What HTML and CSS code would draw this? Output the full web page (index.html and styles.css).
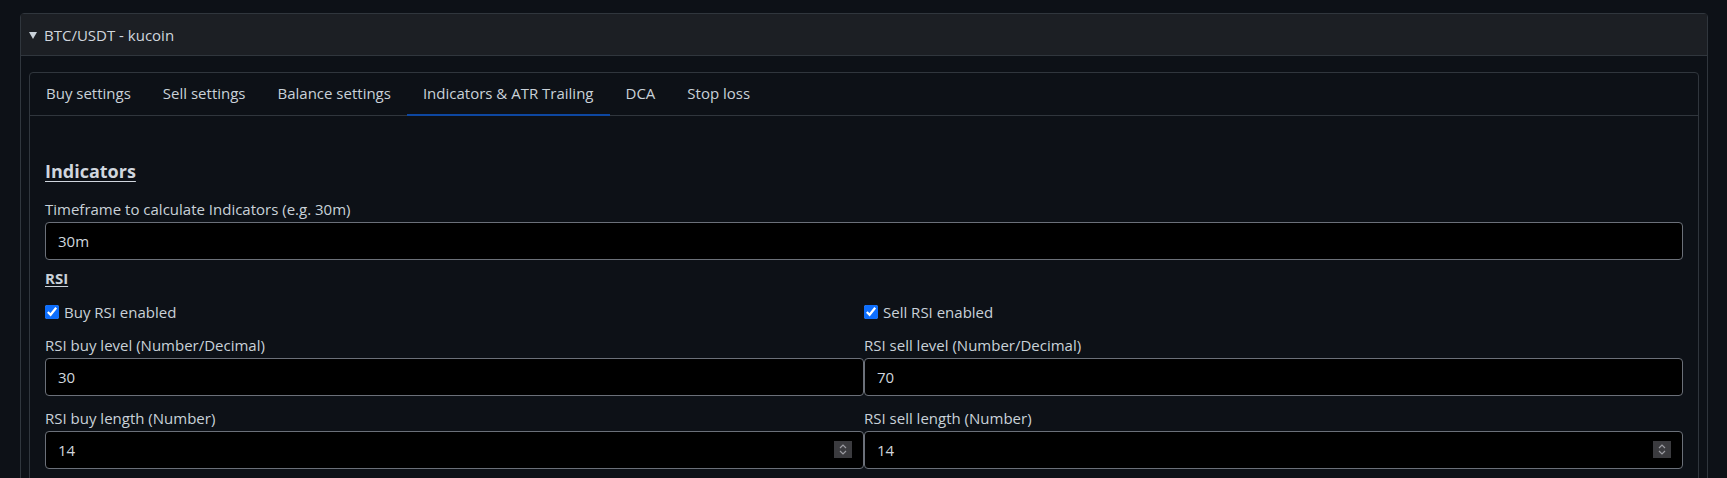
FILE: index.html
```html
<!DOCTYPE html>
<html lang="en">
<head>
<meta charset="utf-8">
<title>BTC/USDT - kucoin</title>
<link rel="stylesheet" href="styles.css">
</head>
<body>
<div class="page">
  <details class="pair-card" open>
    <summary class="pair-head">
      <svg class="caret" width="8" height="7" viewBox="0 0 8 7"><path d="M0 0H8L4 7Z" fill="#c9d1d9"/></svg>
      <span>BTC/USDT - kucoin</span>
    </summary>
    <div class="pair-body">
      <div class="tabs-card">
        <nav class="tabs">
          <a class="tab">Buy settings</a>
          <a class="tab">Sell settings</a>
          <a class="tab">Balance settings</a>
          <a class="tab active">Indicators &amp; ATR Trailing</a>
          <a class="tab">DCA</a>
          <a class="tab">Stop loss</a>
        </nav>
        <div class="tab-pane">
          <h2 class="section-title">Indicators</h2>
          <label class="field-label">Timeframe to calculate Indicators (e.g. 30m)</label>
          <input class="field-input" type="text" value="30m">
          <h3 class="sub-title">RSI</h3>
          <div class="two-col">
            <div class="col">
              <label class="check"><input type="checkbox" checked><span>Buy RSI enabled</span></label>
              <label class="field-label">RSI buy level (Number/Decimal)</label>
              <input class="field-input" type="text" value="30">
              <label class="field-label second">RSI buy length (Number)</label>
              <div class="num-wrap">
                <input class="field-input" type="text" value="14">
                <span class="spin"><svg width="10" height="13" viewBox="0 0 10 13"><path d="M2 5L5 2L8 5M2 8L5 11L8 8" fill="none" stroke="#9b9ba1" stroke-width="1.2"/></svg></span>
              </div>
            </div>
            <div class="col">
              <label class="check"><input type="checkbox" checked><span>Sell RSI enabled</span></label>
              <label class="field-label">RSI sell level (Number/Decimal)</label>
              <input class="field-input" type="text" value="70">
              <label class="field-label second">RSI sell length (Number)</label>
              <div class="num-wrap">
                <input class="field-input" type="text" value="14">
                <span class="spin"><svg width="10" height="13" viewBox="0 0 10 13"><path d="M2 5L5 2L8 5M2 8L5 11L8 8" fill="none" stroke="#9b9ba1" stroke-width="1.2"/></svg></span>
              </div>
            </div>
          </div>
        </div>
      </div>
    </div>
  </details>
</div>
</body>
</html>
```

FILE: styles.css
```css
* { box-sizing: border-box; }
html, body {
  margin: 0;
  background: #0d1117;
  color: #c9d1d9;
  font-family: "Open Sans", "Noto Sans", "Liberation Sans", sans-serif;
  font-size: 15px;
  color-scheme: dark;
}
.page {
  padding: 13px 19px 0 20px;
  height: 478px;
  overflow: hidden;
}
.pair-card {
  border: 1px solid #30363d;
  border-radius: 4px;
}
.pair-head {
  list-style: none;
  display: flex;
  align-items: center;
  gap: 7px;
  height: 42px;
  padding: 0 0 0 8px;
  background: #1c1f24;
  border-bottom: 1px solid #30363d;
  font-size: 15px;
  color: #d0d6de;
}
.pair-head::-webkit-details-marker { display: none; }
.caret { margin-top: 1px; }
.pair-body {
  padding: 16px 8px 0 8px;
}
.tabs-card {
  border: 1px solid #30363d;
  border-radius: 4px;
}
.tabs {
  display: flex;
  height: 43px;
  border-bottom: 1px solid #30363d;
}
.tab {
  display: flex;
  align-items: center;
  padding: 0 16px 1px 16px;
  color: #c9d1d9;
  border-bottom: 2px solid transparent;
  margin-bottom: -1px;
}
.tab.active {
  border-bottom-color: #0d47a1;
}
.tab-pane {
  padding: 16px 15px 20px 15px;
}
.section-title {
  margin: 26px 0 0 0;
  font-size: 18px;
  line-height: 26px;
  font-weight: 700;
  text-decoration: underline;
  text-underline-offset: 3px;
  color: #d0d6de;
}
.field-label {
  display: block;
  line-height: 21px;
  margin: 0 0 2px 0;
}
.section-title + .field-label { margin-top: 15px; }
.field-input {
  display: block;
  width: 100%;
  height: 38px;
  padding: 0 12px;
  background: #000;
  border: 1px solid #6b7079;
  border-radius: 4px;
  color: #d0d6de;
  font-family: inherit;
  font-size: 15px;
  outline: none;
}
.sub-title {
  margin: 8px 0 0 0;
  font-size: 15px;
  line-height: 21px;
  font-weight: 700;
  text-decoration: underline;
  text-underline-offset: 2px;
}
.two-col {
  display: grid;
  grid-template-columns: 1fr 1fr;
}
.check {
  display: flex;
  align-items: center;
  gap: 5px;
  height: 22px;
  margin: 12px 0 12px 0;
}
.check input {
  width: 14px;
  height: 14px;
  margin: 0;
  accent-color: #0d6efd;
}
.field-label.second { margin-top: 12px; }
.num-wrap { position: relative; }
.spin {
  position: absolute;
  right: 12px;
  top: 10px;
  width: 18px;
  height: 17px;
  background: #3b3b3f;
  display: flex;
  align-items: center;
  justify-content: center;
}
```
